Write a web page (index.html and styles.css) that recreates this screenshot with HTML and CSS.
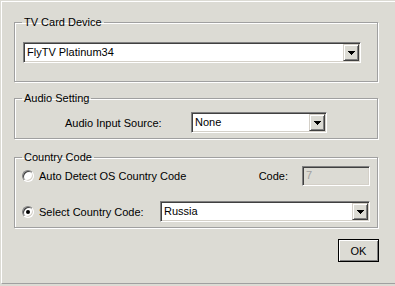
FILE: index.html
```html
<!DOCTYPE html>
<html lang="en">
<head>
    <meta charset="UTF-8" />
    <title>TV Card Settings</title>
    <link rel="stylesheet" href="styles.css">
</head>
<body>
    <div class="dialog">
        <fieldset class="group group-card">
            <legend>TV Card Device</legend>
            <div class="group-body">
                <div class="combo combo-wide">
                    <span class="combo-text">FlyTV Platinum34</span>
                    <span class="combo-btn">
                        <svg width="7" height="4" viewBox="0 0 7 4"><path d="M0 0h7v1H0zM1 1h5v1H1zM2 2h3v1H2zM3 3h1v1H3z" fill="#000"/></svg>
                    </span>
                </div>
            </div>
        </fieldset>

        <fieldset class="group group-audio">
            <legend>Audio Setting</legend>
            <div class="group-body row">
                <span class="label label-audio">Audio Input Source:</span>
                <div class="combo combo-audio">
                    <span class="combo-text">None</span>
                    <span class="combo-btn">
                        <svg width="7" height="4" viewBox="0 0 7 4"><path d="M0 0h7v1H0zM1 1h5v1H1zM2 2h3v1H2zM3 3h1v1H3z" fill="#000"/></svg>
                    </span>
                </div>
            </div>
        </fieldset>

        <fieldset class="group group-country">
            <legend>Country Code</legend>
            <div class="group-body">
                <div class="row row-auto">
                    <label class="radio-label radio-auto"><span class="radio"></span>Auto Detect OS Country Code</label>
                    <span class="label label-code">Code:</span>
                    <div class="textbox disabled">7</div>
                </div>
                <div class="row row-select">
                    <label class="radio-label radio-select"><span class="radio checked"></span>Select Country Code:</label>
                    <div class="combo combo-country">
                        <span class="combo-text">Russia</span>
                        <span class="combo-btn">
                            <svg width="7" height="4" viewBox="0 0 7 4"><path d="M0 0h7v1H0zM1 1h5v1H1zM2 2h3v1H2zM3 3h1v1H3z" fill="#000"/></svg>
                        </span>
                    </div>
                </div>
            </div>
        </fieldset>

        <div class="actions">
            <button class="btn-ok">OK</button>
        </div>
    </div>
</body>
</html>
```

FILE: styles.css
```css
html, body {
    margin: 0;
    background-color: #dcdbd4;
}

body {
    font-family: "Liberation Sans", Arial, sans-serif;
    font-size: 11px;
    color: #000;
    overflow: hidden;
}

.dialog {
    margin: 1px 0 0 1px;
    height: 283px;
    box-sizing: border-box;
    border-top: 1px solid #fff;
    border-left: 1px solid #fff;
    border-bottom: 1px solid #a0a0a0;
    padding: 14px 17px 0 12px;
}

/* etched group boxes */
.group {
    margin: 0;
    padding: 0;
    min-width: 0;
    border: 1px solid #a0a0a0;
    box-shadow: inset 1px 1px 0 #fff, 1px 1px 0 #fff;
}

.group legend {
    margin-left: 7px;
    padding: 0 2px;
    line-height: 13px;
}

.group-audio {
    margin-top: 10px;
}

.group-country {
    margin-top: 12px;
}

.group-card .group-body {
    padding: 13px 16px 18px 8px;
}

.group-audio .group-body {
    padding: 7px 0 5px 50px;
}

.group-country .group-body {
    padding: 2px 7px 5px 7px;
}

.row {
    display: flex;
    align-items: center;
}

.label-audio {
    width: 126px;
}

/* combo boxes */
.combo {
    display: flex;
    height: 21px;
    box-sizing: border-box;
    background: #fff;
    border: 1px solid;
    border-color: #808080 #fff #fff #808080;
    box-shadow: inset 1px 1px 0 #404040, inset -1px -1px 0 #d4d0c8;
    padding: 1px;
}

.combo-wide {
    flex: 1;
}

.combo-audio {
    width: 136px;
}

.combo-country {
    width: 210px;
}

.combo-text {
    flex: 1;
    padding-left: 2px;
    line-height: 17px;
}

.combo-btn {
    width: 16px;
    height: 17px;
    box-sizing: border-box;
    background: #dcdbd4;
    border: 1px solid;
    border-color: #d4d0c8 #404040 #404040 #d4d0c8;
    box-shadow: inset 1px 1px 0 #fff, inset -1px -1px 0 #808080;
    display: flex;
    align-items: center;
    justify-content: center;
}

.combo-btn svg {
    display: block;
    shape-rendering: crispEdges;
}

/* country rows */
.row-auto {
    height: 20px;
}

.row-select {
    margin-top: 15px;
}

.radio-label {
    display: flex;
    align-items: center;
}

.radio-auto {
    flex: 1;
}

.radio-select {
    width: 138px;
}

.radio {
    width: 12px;
    height: 12px;
    box-sizing: border-box;
    border-radius: 50%;
    background: #fff;
    border: 1px solid;
    border-color: #808080 #fff #fff #808080;
    box-shadow: inset 1px 1px 0 #404040, inset -1px -1px 0 #d4d0c8;
    margin-right: 5px;
    display: flex;
    align-items: center;
    justify-content: center;
}

.radio.checked::after {
    content: "";
    width: 4px;
    height: 4px;
    border-radius: 50%;
    background: #000;
}

.label-code {
    margin-right: 14px;
}

.textbox {
    width: 68px;
    height: 20px;
    box-sizing: border-box;
    border: 1px solid;
    border-color: #808080 #fff #fff #808080;
    box-shadow: inset 1px 1px 0 #404040, inset -1px -1px 0 #d4d0c8;
    padding-left: 3px;
    line-height: 17px;
}

.textbox.disabled {
    background: #dcdbd4;
    color: #a0a0a0;
}

/* buttons */
.actions {
    display: flex;
    justify-content: flex-end;
    margin: 11px -1px 0 0;
}

.btn-ok {
    width: 41px;
    height: 23px;
    padding: 0;
    font-family: inherit;
    font-size: 11px;
    color: #000;
    background: #dcdbd4;
    border: 1px solid #000;
    box-shadow: inset 1px 1px 0 #fff, inset -1px -1px 0 #808080;
}
```
